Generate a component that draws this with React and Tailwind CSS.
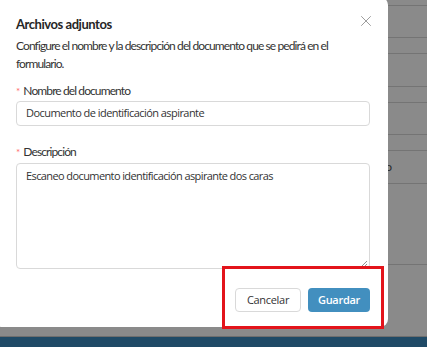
import { X } from 'lucide-react'

/* rows of the page behind the dialog (heights follow the visible row lines) */
const ROWS = [
  { h: 'h-[6px]' },
  { h: 'h-[32px]' },
  { h: 'h-[16px]' },
  { h: 'h-[33px]' },
  { h: 'h-[16px]' },
  { h: 'h-[32px]' },
  { h: 'h-[16px]' },
  { h: 'h-[33px]', text: 'Estado activo' },
  { h: 'h-[81px]' },
]

export default function App() {
  return (
    <div className="relative w-[427px] h-[347px] overflow-hidden bg-[#8a8a8a] font-['Lato','Noto_Sans',sans-serif]">
      {/* Backdrop page */}
      <div className="flex flex-col h-full">
        {ROWS.map((r, i) => (
          <div key={i} className={`${r.h} shrink-0 border-b border-[#747474] flex items-center justify-end pr-[35px] text-[12px] text-[#2b2b2b]`}>
            {r.text}
          </div>
        ))}
        <div className="flex-1" />
        <div className="h-[11px] border-t border-[#6e6e6e] bg-[#1f4a66]" />
      </div>

      {/* Dialog */}
      <div className="absolute left-[-6px] top-[-3px] w-[394px] h-[330px] bg-white rounded-[8px] pl-[22px] pr-[18px] pt-[17px]">
        <button className="absolute right-[13px] top-[15px] text-[#9a9a9a]">
          <X size={18} strokeWidth={1.3} />
        </button>
        <h2 className="h-[20px] leading-[20px] text-[13px] font-bold text-[#262626] tracking-[-0.45px]">Archivos adjuntos</h2>
        <p className="mt-[3px] text-[12px] leading-[18px] text-[#333] tracking-[-0.9px]">
          Configure el nombre y la descripción del documento que se pedirá en el formulario.
        </p>

        <label className="mt-[9px] flex items-center h-[18px] text-[12px] text-[#333] tracking-[-0.9px]">
          <span className="text-[#ff6b6d] text-[10px] mr-[4px]">*</span>Nombre del documento
        </label>
        <div className="mt-[1px] h-[25px] rounded-[4px] border border-[#d9d9d9] flex items-center px-[9px] text-[11px] tracking-[-0.55px] text-[#333] font-['Open_Sans',sans-serif]">
          Documento de identificación aspirante
        </div>

        <label className="mt-[17px] flex items-center h-[18px] text-[12px] text-[#333] tracking-[-0.9px]">
          <span className="text-[#ff6b6d] text-[10px] mr-[4px]">*</span>Descripción
        </label>
        <div className="relative mt-[2px] h-[106px] rounded-[4px] border border-[#d9d9d9] px-[9px] pt-[3px] text-[11px] tracking-[-0.6px] leading-[18px] text-[#333] font-['Open_Sans',sans-serif]">
          Escaneo documento identificación aspirante dos caras
          <svg className="absolute right-[1px] bottom-[1px]" width="7" height="7" viewBox="0 0 7 7">
            <path d="M1 6 L6 1 M4 6 L6 4" stroke="#777" strokeWidth="0.8" />
          </svg>
        </div>

        <div className="mt-[19px] flex justify-end gap-[7px] font-['Open_Sans',sans-serif]">
          <button className="w-[66px] h-[24px] rounded-[4px] border border-[#d9d9d9] bg-white text-[11px] tracking-[-0.3px] text-[#333]">
            Cancelar
          </button>
          <button className="w-[62px] h-[24px] rounded-[4px] bg-[#428fbf] text-[11px] tracking-[-0.3px] font-semibold text-white">
            Guardar
          </button>
        </div>
      </div>

      {/* Highlight annotation */}
      <div className="absolute left-[222px] top-[266px] w-[162px] h-[63px] border-[3px] border-[#e3141b]" />
    </div>
  )
}
